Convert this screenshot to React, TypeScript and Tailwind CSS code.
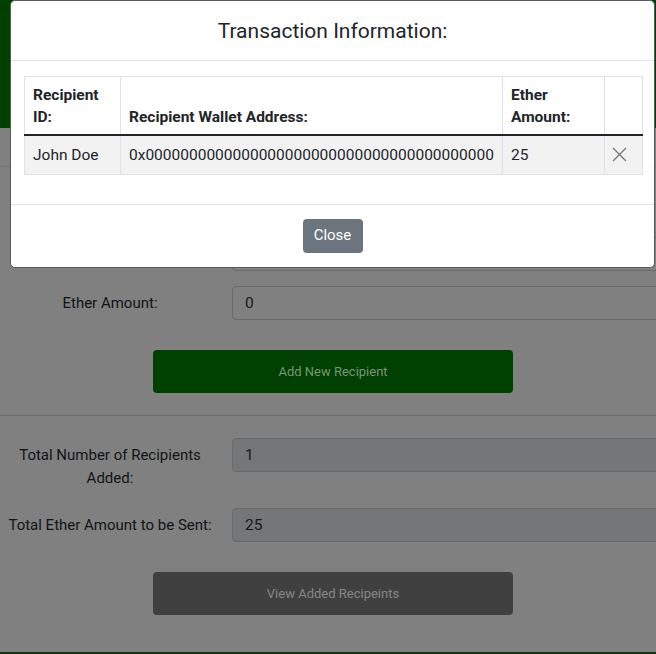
import React from "react";

const font = { fontFamily: "Roboto, 'Liberation Sans', sans-serif" };

function Row({ label, value, disabled, labelTop }: { label: string; value: string; disabled?: boolean; labelTop?: boolean }) {
  return (
    <div className={`flex ${labelTop ? "items-start" : "items-center"}`}>
      <div className={`w-[220px] shrink-0 px-[4px] text-center text-[15px] leading-[23px] text-[#121416] ${labelTop ? "pt-[6px]" : ""}`}>
        {label}
      </div>
      <div
        className={`ml-[12px] h-[34px] w-[440px] shrink-0 rounded-[4px] border border-[#676a6d] pl-[12px] text-[15.5px] leading-[32px] text-[#161819] ${
          disabled ? "bg-[#747677]" : "bg-[#808080]"
        }`}
      >
        {value}
      </div>
    </div>
  );
}

const th = "border border-b-2 border-[#dee2e6] border-b-[#212529] px-[8px] pb-[6px] pt-[7px] text-left align-bottom font-bold leading-[22px]";
const td = "h-[39px] border border-[#dee2e6] px-[8px] align-middle leading-[22px]";

export default function App() {
  return (
    <div className="relative h-[654px] w-[656px] overflow-hidden bg-[#808080]" style={font}>
      {/* page behind backdrop */}
      <div className="h-[128px] bg-[#004000]" />
      <div className="mt-[38px] border-t border-[#6f6f6f]" />
      <div className="mt-[70px]">
        <Row label="Recipient Wallet Address:" value="" />
      </div>
      <div className="mt-[15px]">
        <Row label="Ether Amount:" value="0" />
      </div>
      <div className="mt-[30px] flex justify-center pl-[10px]">
        <div className="flex h-[43px] w-[360px] items-center justify-center rounded-[4px] bg-[#004000] text-[13px] text-[#7a957a]">
          Add New Recipient
        </div>
      </div>
      <div className="mt-[22px] border-t border-[#6f6f6f]" />
      <div className="mt-[22px]">
        <Row label="Total Number of Recipients Added:" value="1" disabled labelTop />
      </div>
      <div className="mt-[18px]">
        <Row label="Total Ether Amount to be Sent:" value="25" disabled />
      </div>
      <div className="mt-[30px] flex justify-center pl-[10px]">
        <div className="flex h-[43px] w-[360px] items-center justify-center rounded-[4px] bg-[#404040] text-[13px] text-[#878787]">
          View Added Recipeints
        </div>
      </div>
      <div className="mt-[37px] h-[10px] bg-[#0a3a0a]" />

      {/* modal */}
      <div className="absolute left-[10px] top-0 w-[645px] rounded-[5px] border border-[#5a5a5a] bg-white">
        <div className="flex h-[60px] items-center justify-center border-b border-[#dee2e6]">
          <h5 className="text-[21px] leading-[30px] text-[#212529]">Transaction Information:</h5>
        </div>
        <div className="px-[13px] pb-[29px] pt-[15px]">
          <table className="w-[618px] table-fixed border-collapse text-[15.5px] text-[#212529]">
            <colgroup>
              <col className="w-[96px]" />
              <col className="w-[382px]" />
              <col className="w-[102px]" />
              <col className="w-[38px]" />
            </colgroup>
            <thead>
              <tr>
                <th className={th}>Recipient ID:</th>
                <th className={th}>Recipient Wallet Address:</th>
                <th className={th}>Ether Amount:</th>
                <th className={th} />
              </tr>
            </thead>
            <tbody>
              <tr className="bg-[#f2f2f2]">
                <td className={`${td} whitespace-nowrap`}>John Doe</td>
                <td className={`${td} whitespace-nowrap`}>0x0000000000000000000000000000000000000000</td>
                <td className={td}>25</td>
                <td className="h-[39px] border border-[#dee2e6] p-0 align-middle">
                  <div className="flex justify-center pr-[8px]">
                    <svg width="15" height="15" viewBox="0 0 15 15" fill="none">
                      <path d="M1 1L14 14M14 1L1 14" stroke="#7a7a7a" strokeWidth="1.4" />
                    </svg>
                  </div>
                </td>
              </tr>
            </tbody>
          </table>
        </div>
        <div className="flex justify-center border-t border-[#dee2e6] py-[14px]">
          <button className="h-[34px] w-[60px] rounded-[4px] bg-[#6c757d] text-[15px] text-white">Close</button>
        </div>
      </div>
    </div>
  );
}
